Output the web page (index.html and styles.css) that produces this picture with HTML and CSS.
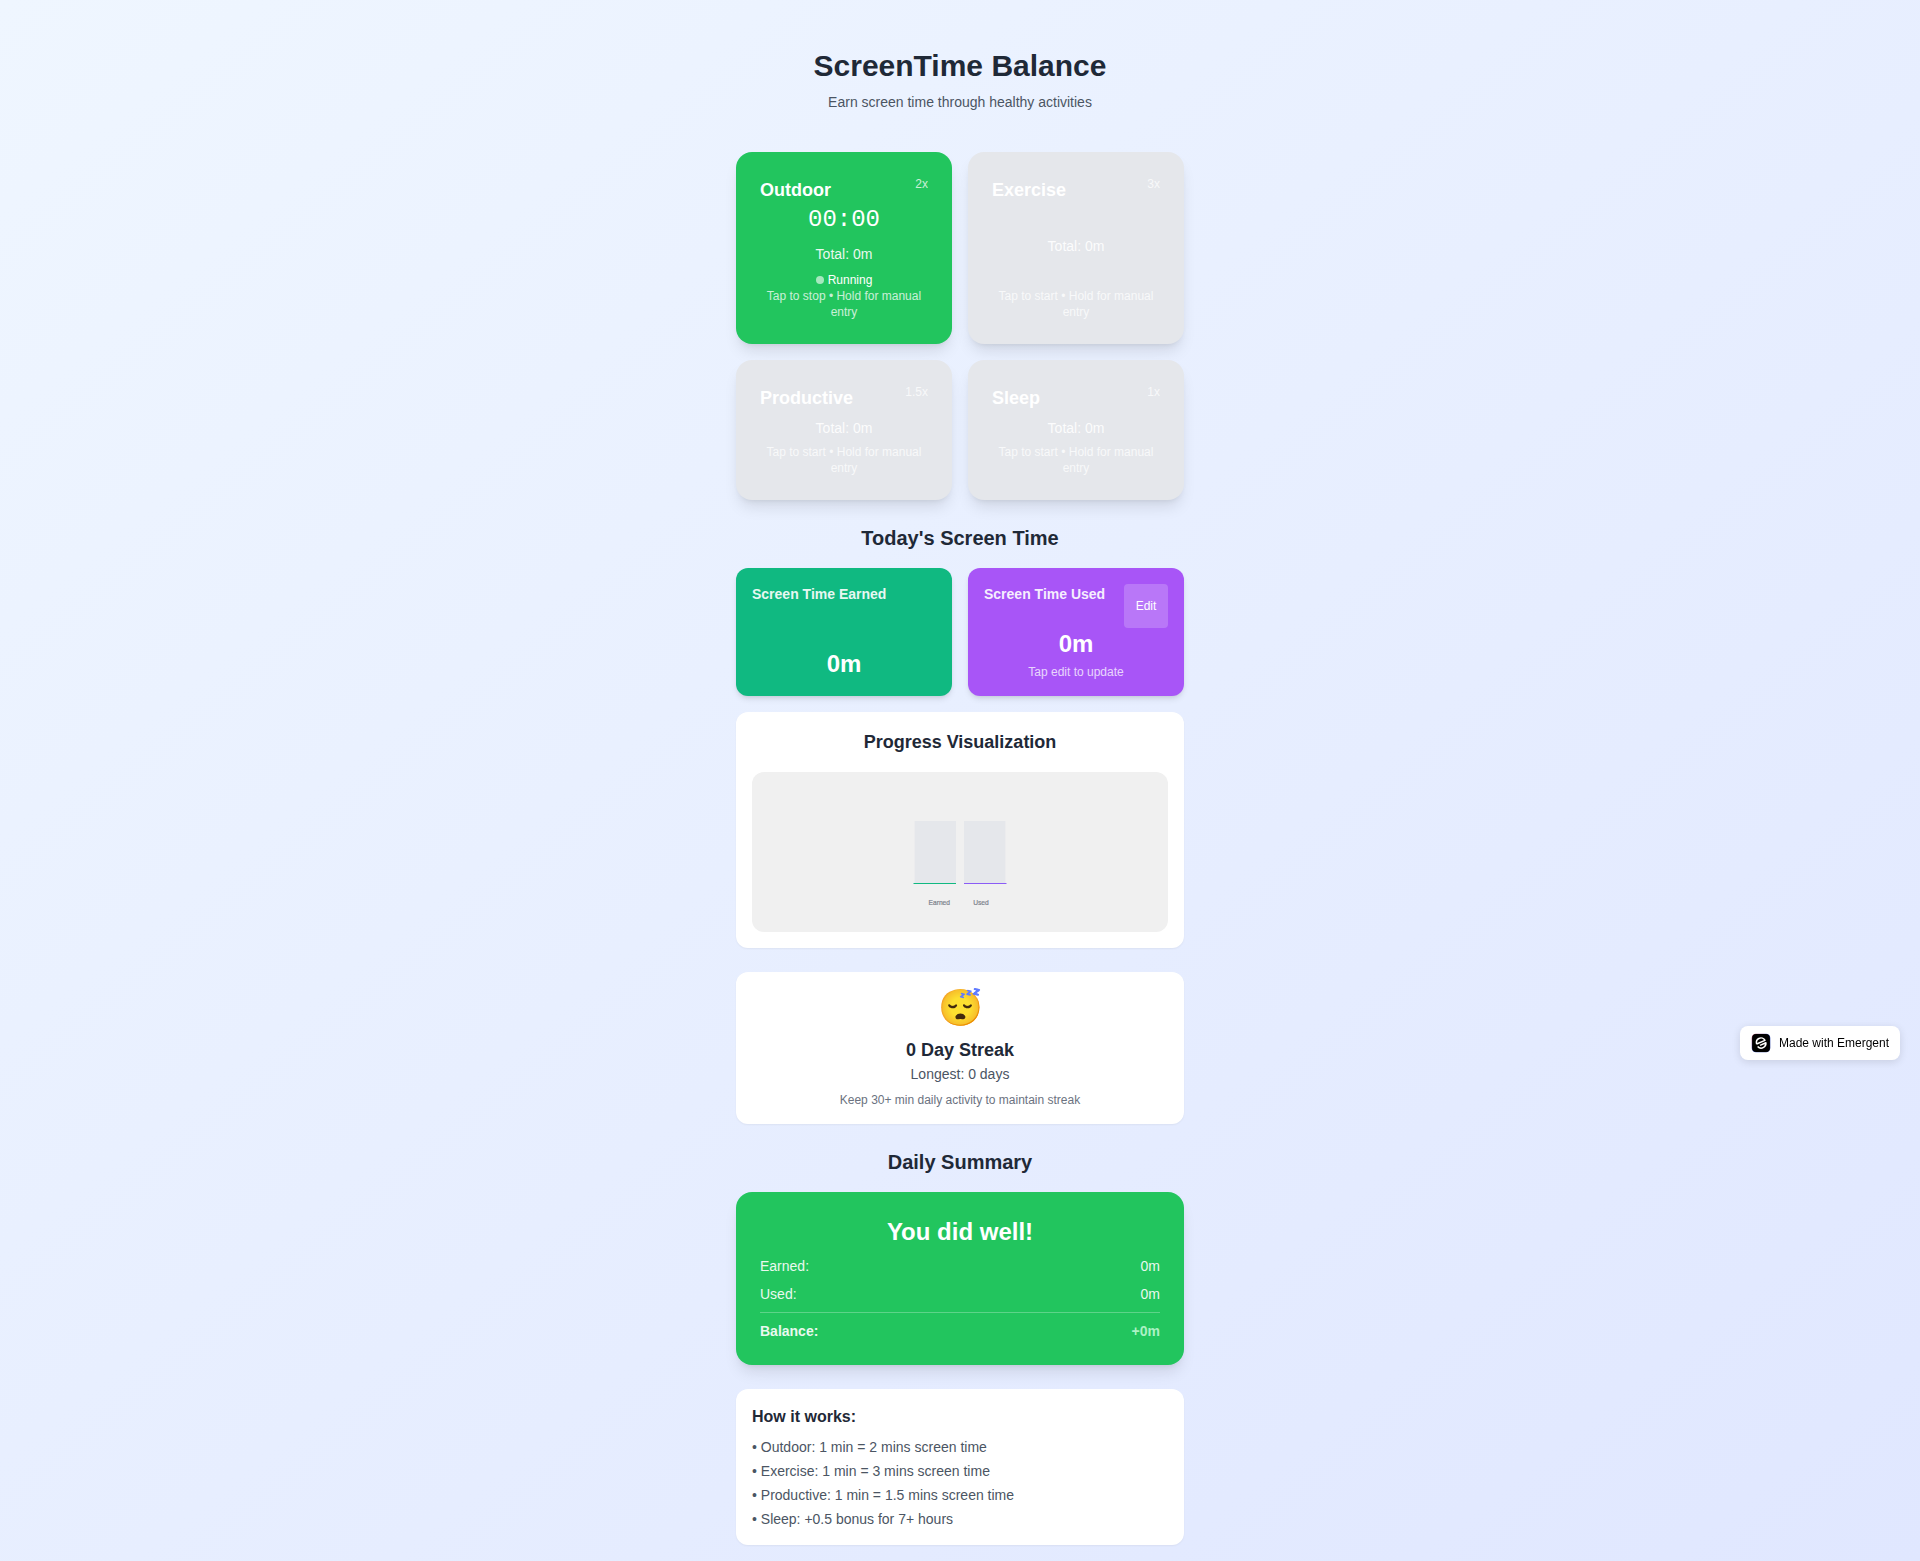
FILE: index.html
```html
<!DOCTYPE html>
<html lang="en">
<head>
<meta charset="utf-8">
<title>ScreenTime Balance</title>
<link rel="stylesheet" href="styles.css">
</head>
<body>
<main class="page">
  <header class="intro">
    <h1 class="intro-title">ScreenTime Balance</h1>
    <p class="intro-sub">Earn screen time through healthy activities</p>
  </header>

  <section class="activities">
    <div class="activity activity-active">
      <div class="activity-head"><h3 class="activity-name">Outdoor</h3><span class="rate">2x</span></div>
      <div class="timer">00:00</div>
      <div class="total">Total: 0m</div>
      <div class="running"><span class="dot"></span>Running</div>
      <div class="hint">Tap to stop • Hold for manual entry</div>
    </div>
    <div class="activity">
      <div class="activity-head"><h3 class="activity-name">Exercise</h3><span class="rate">3x</span></div>
      <div class="total">Total: 0m</div>
      <div class="hint">Tap to start • Hold for manual entry</div>
    </div>
    <div class="activity">
      <div class="activity-head"><h3 class="activity-name">Productive</h3><span class="rate">1.5x</span></div>
      <div class="total">Total: 0m</div>
      <div class="hint">Tap to start • Hold for manual entry</div>
    </div>
    <div class="activity">
      <div class="activity-head"><h3 class="activity-name">Sleep</h3><span class="rate">1x</span></div>
      <div class="total">Total: 0m</div>
      <div class="hint">Tap to start • Hold for manual entry</div>
    </div>
  </section>

  <h2 class="section-title">Today's Screen Time</h2>
  <section class="stats">
    <div class="stat stat-earned">
      <h3 class="stat-label">Screen Time Earned</h3>
      <div class="stat-value">0m</div>
    </div>
    <div class="stat stat-used">
      <div class="stat-head"><h3 class="stat-label">Screen Time Used</h3><button class="edit">Edit</button></div>
      <div class="stat-value">0m</div>
      <div class="stat-note">Tap edit to update</div>
    </div>
  </section>

  <section class="panel progress">
    <h3 class="panel-title">Progress Visualization</h3>
    <div class="chart">
      <svg class="chart-art" width="416" height="160" viewBox="0 0 416 160">
        <rect class="track" x="162.6" y="49" width="41.4" height="62"/>
        <rect class="track" x="212" y="49" width="41.4" height="62"/>
        <rect class="level-earned" x="161.5" y="111" width="42.5" height="1"/>
        <rect class="level-used" x="212" y="111" width="42.5" height="1"/>
        <text class="chart-label" x="187.3" y="133.3">Earned</text>
        <text class="chart-label" x="228.9" y="133.3">Used</text>
      </svg>
    </div>
  </section>

  <section class="panel streak">
    <div class="streak-face">😴</div>
    <h3 class="panel-title">0 Day Streak</h3>
    <p class="streak-best">Longest: 0 days</p>
    <p class="streak-note">Keep 30+ min daily activity to maintain streak</p>
  </section>

  <h2 class="section-title">Daily Summary</h2>
  <section class="summary">
    <h3 class="summary-title">You did well!</h3>
    <div class="summary-row"><span>Earned:</span><span>0m</span></div>
    <div class="summary-row"><span>Used:</span><span>0m</span></div>
    <div class="summary-row summary-balance"><span>Balance:</span><span class="gain">+0m</span></div>
  </section>

  <section class="panel rules">
    <h3 class="rules-title">How it works:</h3>
    <p>• Outdoor: 1 min = 2 mins screen time</p>
    <p>• Exercise: 1 min = 3 mins screen time</p>
    <p>• Productive: 1 min = 1.5 mins screen time</p>
    <p>• Sleep: +0.5 bonus for 7+ hours</p>
  </section>
</main>

<a class="badge">
  <svg width="20" height="20" viewBox="0 0 20 20">
    <defs>
      <linearGradient id="edge" x1="0" y1="0" x2="1" y2="1">
        <stop offset="0" stop-color="#d64a5c"/>
        <stop offset=".5" stop-color="#3b5bd6"/>
        <stop offset="1" stop-color="#1d2f7a"/>
      </linearGradient>
    </defs>
    <rect class="badge-edge" x=".7" y=".7" width="18.6" height="18.6" rx="4.2"/>
    <rect x="1.1" y="1.1" width="17.8" height="17.8" rx="4"/>
    <g class="badge-mark">
      <path d="M5.6 11 14 7.4C12.9 5.3 10.2 4.4 7.9 5.5 5.9 6.5 5 8.7 5.6 11"/>
      <path d="M6.6 13.4C8.2 15.2 10.6 15.5 12.6 14.4 14.3 13.4 15.1 11.6 14.9 9.8L9 12.4"/>
    </g>
  </svg>
  <span>Made with Emergent</span>
</a>
</body>
</html>
```
FILE: styles.css
```css
* { box-sizing: border-box; margin: 0; padding: 0; }

body {
  min-height: 1561px;
  background: linear-gradient(to bottom right, #eff6ff, #e0e7ff);
  font-family: "Liberation Sans", Arial, sans-serif;
  font-size: 14px;
  line-height: 20px;
  color: #1f2937;
}

.page { width: 480px; margin: 0 auto; padding: 48px 16px 16px; }

.intro { text-align: center; margin-bottom: 40px; }
.intro-title { font-size: 30px; line-height: 36px; margin-bottom: 8px; }
.intro-sub { color: #4b5563; }

.activities { display: grid; grid-template-columns: 1fr 1fr; gap: 16px; }
.activity {
  display: flex;
  flex-direction: column;
  justify-content: space-between;
  min-height: 140px;
  padding: 24px;
  border-radius: 16px;
  background: #e5e7eb;
  color: #fff;
  text-align: center;
  box-shadow: 0 10px 15px -3px rgba(0,0,0,.1), 0 4px 6px -4px rgba(0,0,0,.1);
}
.activity-active { background: #22c55e; }
.activity-active .total { margin: 8px 0; }
.activity-head { display: flex; justify-content: space-between; align-items: flex-start; }
.activity-name { font-size: 18px; line-height: 28px; }
.rate { font-size: 12px; line-height: 16px; opacity: .75; }
.timer { font-family: "Liberation Mono", monospace; font-size: 24px; line-height: 32px; }
.total { opacity: .9; }
.running { display: flex; align-items: center; justify-content: center; gap: 4px; font-size: 12px; line-height: 16px; }
.dot { width: 8px; height: 8px; border-radius: 50%; background: #fff; opacity: .6; }
.hint { font-size: 12px; line-height: 16px; opacity: .75; }

.section-title { margin: 24px 0 16px; font-size: 20px; line-height: 28px; text-align: center; }

.stats { display: grid; grid-template-columns: 1fr 1fr; gap: 16px; }
.stat {
  display: flex;
  flex-direction: column;
  justify-content: space-between;
  padding: 16px;
  border-radius: 12px;
  color: #fff;
  box-shadow: 0 4px 6px -1px rgba(0,0,0,.1), 0 2px 4px -2px rgba(0,0,0,.1);
}
.stat-earned { background: #10b981; }
.stat-used { background: #a855f7; }
.stat-head { display: flex; justify-content: space-between; align-items: flex-start; }
.stat-label { font-size: 14px; line-height: 20px; opacity: .9; }
.stat-value { font-size: 24px; line-height: 32px; font-weight: bold; text-align: center; }
.stat-note { margin-top: 4px; font-size: 12px; line-height: 16px; text-align: center; opacity: .75; }
.edit { width: 44px; height: 44px; border: 0; border-radius: 4px; background: rgba(255,255,255,.2); color: #fff; font: 12px/16px "Liberation Sans", Arial, sans-serif; }

.panel { padding: 16px; border-radius: 12px; background: #fff; box-shadow: 0 1px 2px rgba(0,0,0,.05); }
.panel-title { font-size: 18px; line-height: 28px; text-align: center; }
.progress { margin-top: 16px; }
.chart { height: 160px; margin-top: 16px; border-radius: 12px; background: #f0f0f0; }
.chart-art { display: block; }
.track { fill: #e5e7eb; }
.level-earned { fill: #10b981; }
.level-used { fill: #8b5cf6; }
.chart-label { font-size: 6.67px; text-anchor: middle; fill: #7d828c; stroke: #7d828c; stroke-width: .2; }

.streak { margin-top: 24px; text-align: center; }
.streak-face { height: 40px; margin-bottom: 8px; font-size: 36px; line-height: 40px; }
.streak-best { color: #4b5563; }
.streak-note { margin-top: 8px; font-size: 12px; line-height: 16px; color: #6b7280; }

.summary {
  padding: 24px;
  border-radius: 16px;
  background: #22c55e;
  color: #fff;
  box-shadow: 0 10px 15px -3px rgba(0,0,0,.1), 0 4px 6px -4px rgba(0,0,0,.1);
}
.summary-title { font-size: 24px; line-height: 32px; text-align: center; }
.summary-row { display: flex; justify-content: space-between; margin-top: 8px; opacity: .9; }
.summary-balance { padding-top: 8px; border-top: 1px solid rgba(255,255,255,.3); font-weight: bold; }
.gain { color: #bbf7d0; }

.rules { margin-top: 24px; color: #4b5563; }
.rules-title { margin-bottom: 8px; font-size: 16px; line-height: 24px; color: #1f2937; }
.rules p + p { margin-top: 4px; }

.badge {
  position: fixed;
  right: 20px;
  top: 1026px;
  display: flex;
  align-items: center;
  gap: 8px;
  width: 160px;
  height: 34px;
  padding-left: 11px;
  border-radius: 8px;
  background: #fff;
  color: #000;
  font-size: 12px;
  line-height: 16px;
  white-space: nowrap;
  box-shadow: 0 2px 8px rgba(0,0,0,.12);
}
.badge-edge { fill: url(#edge); }
.badge-mark { fill: none; stroke: #fff; stroke-width: 1.5; stroke-linejoin: round; }
```
